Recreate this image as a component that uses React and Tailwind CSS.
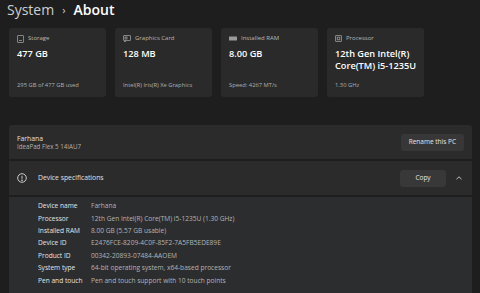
import React from 'react';

const font = { fontFamily: '"Open Sans", "Noto Sans", sans-serif' };

function StorageIcon() {
  return (
    <svg width="7" height="8" viewBox="0 0 7 8" fill="none" stroke="#9a9a9a" strokeWidth="0.8">
      <rect x="0.5" y="0.5" width="6" height="7" rx="0.5" />
      <path d="M2 5.5h3" />
    </svg>
  );
}

function GpuIcon() {
  return (
    <svg width="8" height="7" viewBox="0 0 8 7" fill="none" stroke="#9a9a9a" strokeWidth="0.8">
      <rect x="0.5" y="0.5" width="7" height="5" rx="0.5" />
      <rect x="2" y="2" width="2" height="2" />
      <path d="M1 6.5h2" />
    </svg>
  );
}

function RamIcon() {
  return (
    <svg width="8" height="6" viewBox="0 0 8 6" fill="#9a9a9a">
      <rect x="0" y="0.5" width="8" height="4" rx="0.5" />
    </svg>
  );
}

function CpuIcon() {
  return (
    <svg width="7" height="7" viewBox="0 0 7 7" fill="none" stroke="#9a9a9a" strokeWidth="0.8">
      <rect x="0.5" y="0.5" width="6" height="6" rx="0.5" />
      <rect x="2.2" y="2.2" width="2.6" height="2.6" />
    </svg>
  );
}

const cards = [
  { icon: <StorageIcon />, label: 'Storage', value: ['477 GB'], foot: '295 GB of 477 GB used' },
  { icon: <GpuIcon />, label: 'Graphics Card', value: ['128 MB'], foot: 'Intel(R) Iris(R) Xe Graphics' },
  { icon: <RamIcon />, label: 'Installed RAM', value: ['8.00 GB'], foot: 'Speed: 4267 MT/s' },
  { icon: <CpuIcon />, label: 'Processor', value: ['12th Gen Intel(R)', 'Core(TM) i5-1235U'], foot: '1.30 GHz' },
];

const specs = [
  ['Device name', 'Farhana'],
  ['Processor', '12th Gen Intel(R) Core(TM) i5-1235U (1.30 GHz)'],
  ['Installed RAM', '8.00 GB (5.57 GB usable)'],
  ['Device ID', 'E2476FCE-8209-4C0F-85F2-7A5FB5EDE89E'],
  ['Product ID', '00342-20893-07484-AAOEM'],
  ['System type', '64-bit operating system, x64-based processor'],
  ['Pen and touch', 'Pen and touch support with 10 touch points'],
];

export default function App() {
  return (
    <div className="w-[480px] h-[293px] overflow-hidden bg-[#1e1e1e] text-white" style={font}>
      <div className="flex items-start h-[28px] pl-[7px]">
        <span className="text-[14px] font-medium text-[#cfcfcf] leading-[19px]">System</span>
        <span className="text-[11px] text-[#cfcfcf] mx-[8px] leading-[19px]">›</span>
        <span className="text-[14px] font-semibold text-white leading-[19px]">About</span>
      </div>

      <div className="flex gap-[9px] pl-[9px]">
        {cards.map((c, i) => (
          <div key={i} className="w-[97px] h-[69px] rounded-[3px] bg-[#2a2a2a] pl-[8px] pt-[6px] flex flex-col">
            <div className="flex items-center gap-[4px] h-[9px]">
              {c.icon}
              <span className="text-[6px] text-[#b8b8b8] leading-[9px]">{c.label}</span>
            </div>
            <div className="mt-[5px] text-[9.2px] font-semibold text-white leading-[11.5px]">
              {c.value.map((v, j) => <div key={j}>{v}</div>)}
            </div>
            <div className="mt-auto mb-[8px] text-[5.8px] text-[#b0b0b0] leading-[8px]">{c.foot}</div>
          </div>
        ))}
      </div>

      <div className="mt-[28px] ml-[9px] mr-[8px] flex flex-col gap-[2px]">
        <div className="h-[34px] bg-[#2b2b2b] rounded-t-[3px] flex items-center justify-between pl-[8px] pr-[8px]">
          <div className="flex flex-col">
            <span className="text-[6.8px] text-[#e0e0e0] leading-[9px]">Farhana</span>
            <span className="text-[6.2px] text-[#b0b0b0] leading-[8px]">IdeaPad Flex 5 14IAU7</span>
          </div>
          <div className="h-[17px] px-[8px] rounded-[3px] bg-[#373737] flex items-center text-[6.5px] text-[#e6e6e6]">
            Rename this PC
          </div>
        </div>

        <div className="h-[34px] bg-[#2b2b2b] flex items-center justify-between pl-[8px] pr-[9px]">
          <div className="flex items-center gap-[11px]">
            <svg width="10" height="10" viewBox="0 0 10 10" fill="none" stroke="#dcdcdc" strokeWidth="0.9">
              <circle cx="5" cy="5" r="4.3" />
              <path d="M5 2.8v3" />
              <circle cx="5" cy="7.2" r="0.4" fill="#dcdcdc" />
            </svg>
            <span className="text-[6.8px] text-[#e0e0e0]">Device specifications</span>
          </div>
          <div className="flex items-center gap-[9px]">
            <div className="w-[46px] h-[17px] rounded-[3px] bg-[#383838] flex items-center justify-center text-[6.5px] text-[#e6e6e6]">
              Copy
            </div>
            <svg width="8" height="6" viewBox="0 0 8 6" fill="none" stroke="#d0d0d0" strokeWidth="0.9">
              <path d="M1.5 4.2L4 1.8l2.5 2.4" />
            </svg>
          </div>
        </div>

        <div className="h-[100px] bg-[#2c2d2f] pl-[29px] pt-[3px] flex flex-col">
          {specs.map(([k, v]) => (
            <div key={k} className="flex h-[12.4px] items-center">
              <span className="w-[53px] text-[6.6px] text-[#e4e4e4]">{k}</span>
              <span className="text-[6.6px] text-[#b4b4b4]">{v}</span>
            </div>
          ))}
        </div>
      </div>
    </div>
  );
}
